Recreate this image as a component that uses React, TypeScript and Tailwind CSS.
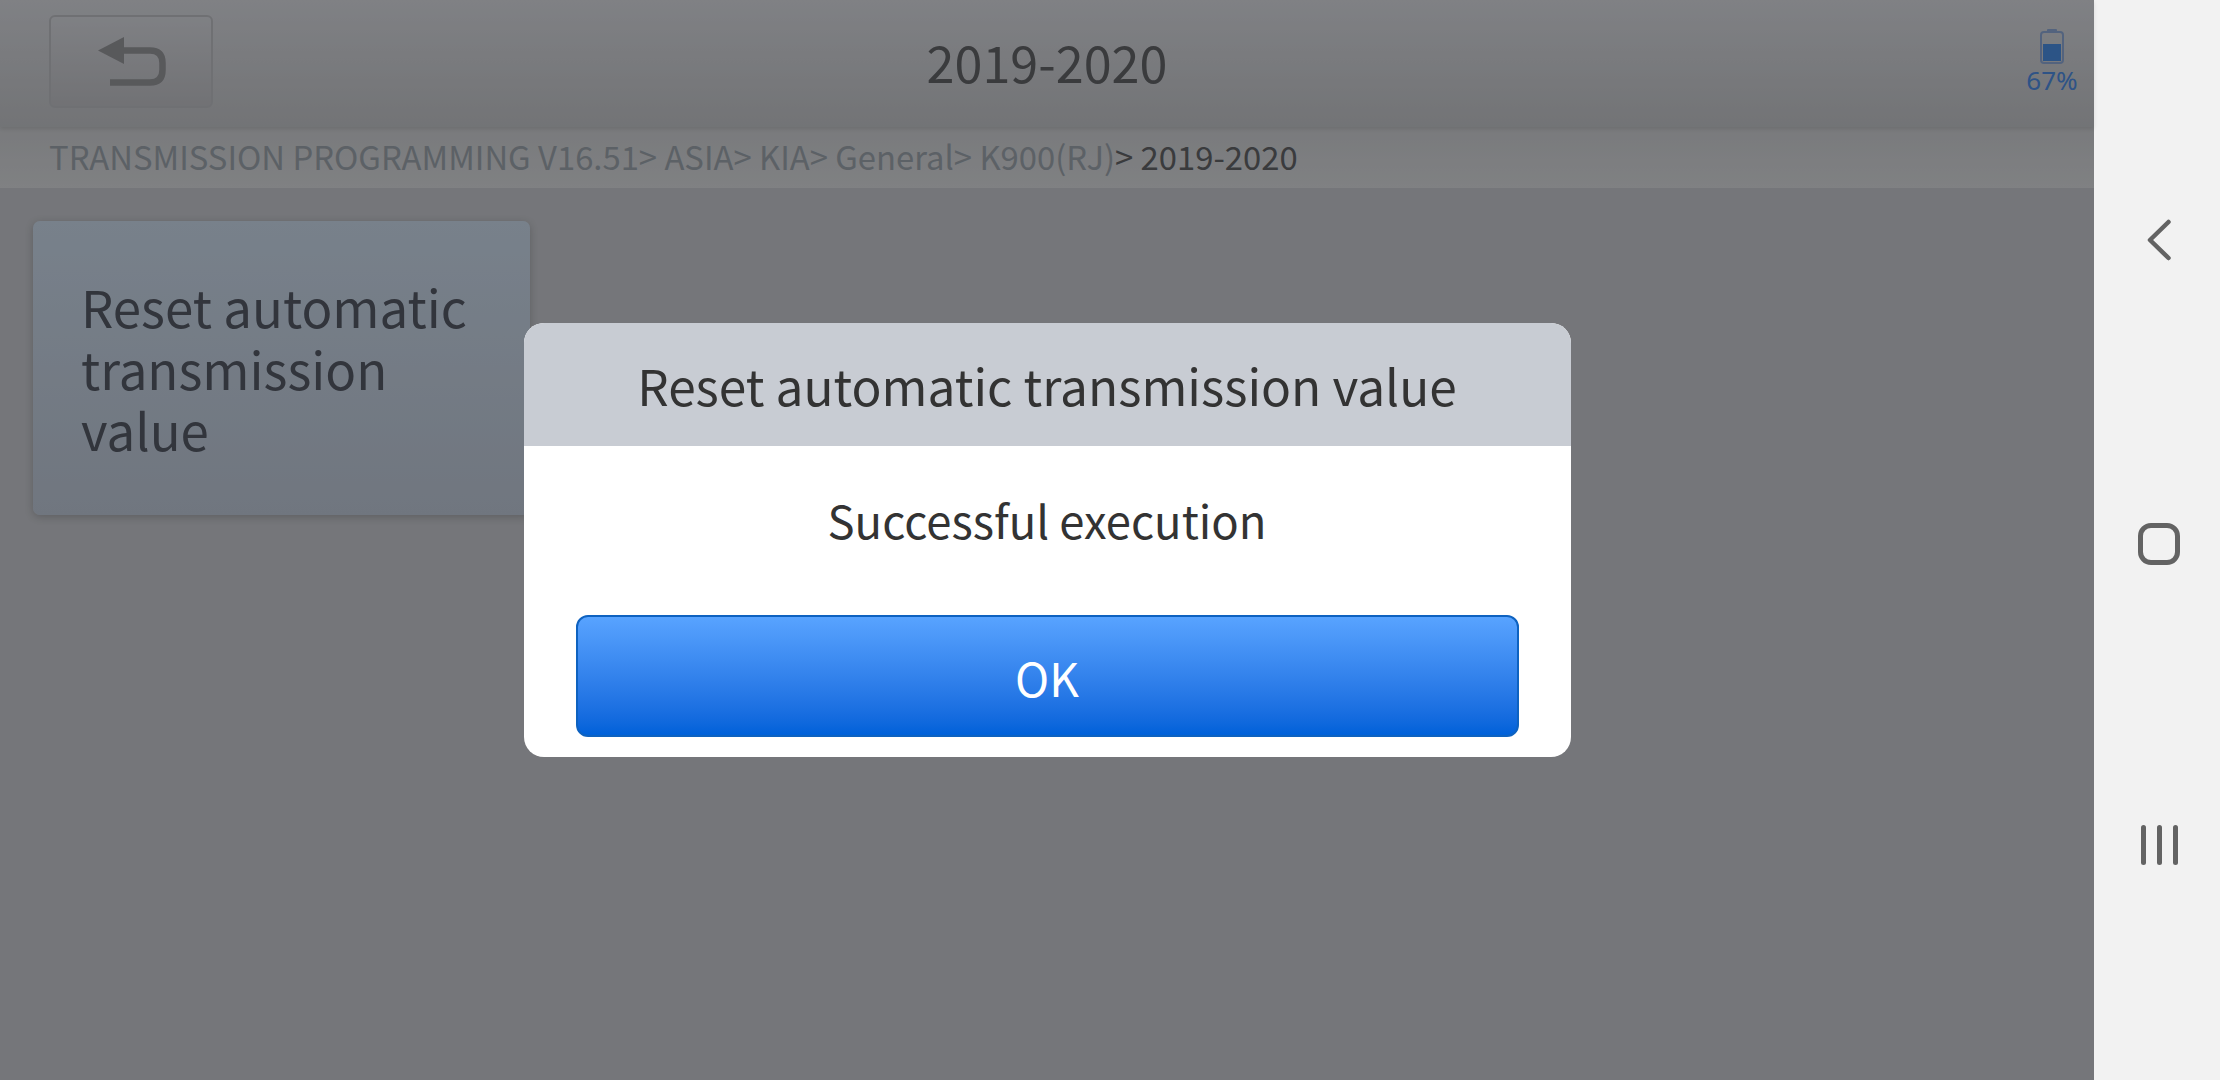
const font = { fontFamily: '"Noto Sans CJK SC", "Noto Sans", sans-serif' };

const BackIcon = () => (
    <svg width="68" height="49" viewBox="0 0 68 49" fill="none">
        <path d="M0 13.5 L26 0 V27 Z" fill="#939498" />
        <path d="M24 13.5 H52 Q64.5 13.5 64.5 26 V33 Q64.5 45.5 52 45.5 H12" stroke="#939498" strokeWidth="6.5" />
    </svg>
);

const BatteryIcon = () => (
    <svg width="24" height="35" viewBox="0 0 24 35" fill="none">
        <rect x="7" y="0" width="10" height="3" rx="1" fill="#8aa6d2" />
        <rect x="1" y="3" width="22" height="31" rx="3" stroke="#8aa6d2" strokeWidth="2" />
        <rect x="3" y="15" width="18" height="17" fill="#4a8ce0" />
    </svg>
);

const Header = () => (
    <header className="relative z-10 grid h-[127px] shrink-0 grid-cols-[1fr_auto_1fr] items-center bg-gradient-to-b from-[#d5d7dd] to-[#bfc1c5] pl-[49px] pr-[17px] shadow-[0_2px_4px_rgba(0,0,0,0.1)]">
        <button className="mb-[4px] flex h-[93px] w-[164px] items-center justify-center rounded-[6px] border-2 border-[#b9bbc0] bg-gradient-to-b from-[#d4d6dc] to-[#bdbec3] pl-[2px]">
            <BackIcon />
        </button>
        <h1 className="mb-[4px] -translate-x-[16px] text-center text-[50.3px] text-[#616367]">2019-2020</h1>
        <div className="mb-[2px] flex flex-col items-end">
            <div className="flex w-[50px] flex-col items-center">
                <BatteryIcon />
                <span className="whitespace-nowrap text-[26px] leading-[32px] text-[#4d8ae0] [font-family:'Noto_Sans',sans-serif]">67%</span>
            </div>
        </div>
    </header>
);

const Breadcrumb = () => (
    <nav className="flex h-[61px] shrink-0 items-center bg-gradient-to-b from-[#caccd0] to-[#d5d7da] pb-[3px] pl-[49px] text-[32.8px] text-[#9aa2aa]">
        <span>TRANSMISSION PROGRAMMING V16.51&gt; ASIA&gt; KIA&gt; General&gt; K900(RJ)</span>
        <span className="text-[#616367]">&gt; 2019-2020</span>
    </nav>
);

const MenuCard = () => (
    <div className="h-[294px] w-[497px] rounded-[7px] bg-gradient-to-b from-[#c8d7e8] to-[#bbc5d4] pl-[48px] pr-[40px] pt-[55px] shadow-[0_2px_8px_rgba(0,0,0,0.2)]">
        <p className="text-[51px] leading-[61.5px] text-[#545965]">Reset automatic transmission value</p>
    </div>
);

const Dialog = () => (
    <div className="w-[1047px] overflow-hidden rounded-[20px] bg-white">
        <div className="flex h-[123px] items-center justify-center bg-[#c8ccd3] text-[49.6px] text-[#333333]">
            Reset automatic transmission value
        </div>
        <div className="flex h-[169px] items-start justify-center pt-[39px] text-[45.4px] text-[#333333]">
            Successful execution
        </div>
        <div className="px-[52px] pb-[20px]">
            <button className="flex h-[122px] w-full items-center justify-center rounded-[12px] border-2 border-[#0e62c0] bg-gradient-to-b from-[#58a3ff] to-[#0061d9] pt-[2px] text-[46px] text-white">
                OK
            </button>
        </div>
    </div>
);

const NavBar = () => (
    <aside className="flex w-[126px] shrink-0 flex-col items-center bg-[#f2f2f2] pl-[4px]">
        <div className="flex h-[480px] items-center">
            <svg width="24" height="42" viewBox="0 0 24 42" fill="none">
                <path d="M21.5 3 L3 21 L21.5 39" stroke="#636363" strokeWidth="4.5" strokeLinecap="round" strokeLinejoin="round" />
            </svg>
        </div>
        <div className="mt-[43px] h-[42px] w-[42px] rounded-[13px] border-[5px] border-[#636363]" />
        <div className="mt-[260px] flex h-[40px] items-center gap-[11px]">
            <div className="h-[40px] w-[5px] rounded-full bg-[#636363]" />
            <div className="h-[40px] w-[5px] rounded-full bg-[#636363]" />
            <div className="h-[40px] w-[5px] rounded-full bg-[#636363]" />
        </div>
    </aside>
);

export default function App() {
    return (
        <div className="flex h-[1080px] w-[2220px] overflow-hidden" style={font}>
            <main className="relative flex w-[2094px] flex-col bg-[#c3c5cb]">
                <Header />
                <Breadcrumb />
                <div className="flex-1 pl-[33px] pt-[33px]">
                    <MenuCard />
                </div>
                <div className="absolute inset-0 z-20 flex items-center justify-center bg-black/40">
                    <Dialog />
                </div>
            </main>
            <NavBar />
        </div>
    );
}
